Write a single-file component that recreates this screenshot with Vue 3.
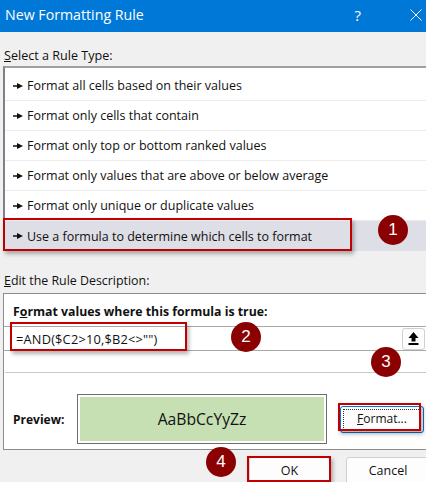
<script setup>
const rules = [
  'Format all cells based on their values',
  'Format only cells that contain',
  'Format only top or bottom ranked values',
  'Format only values that are above or below average',
  'Format only unique or duplicate values',
  'Use a formula to determine which cells to format',
]
</script>

<template>
  <div class="dialog">
    <header class="title">
      <span class="title-text">New Formatting Rule</span>
      <span class="help">?</span>
      <svg class="close" width="12" height="12" viewBox="0 0 12 12">
        <path d="M.5.5 11.5 11.5M11.5.5 .5 11.5" stroke="#fff" stroke-width="1" fill="none" />
      </svg>
    </header>

    <main class="body">
      <div class="label first"><u>S</u>elect a Rule Type:</div>
      <ul class="list">
        <li v-for="(r, i) in rules" :key="r" class="row" :class="{ sel: i === 5 }">
          <svg class="arrow" width="10" height="6" viewBox="0 0 10 6">
            <path d="M0 2.2h4V0l6 3-6 3V3.8H0z" fill="#111" />
          </svg>
          <span>{{ r }}</span>
        </li>
      </ul>

      <div class="label second"><u>E</u>dit the Rule Description:</div>
      <section class="panel">
        <div class="bold heading">F<u>o</u>rmat values where this formula is true:</div>
        <div class="formula">
          <span class="formula-text">=AND($C2&gt;10,$B2&lt;&gt;"")</span>
          <button class="upload">
            <svg width="11" height="13" viewBox="0 0 11 13">
              <path d="M5.5 0 10.5 6H7.5V9.5H3.5V6H.5zM.5 11h10v2H.5z" fill="#000" />
            </svg>
          </button>
        </div>
        <div class="sep"></div>
        <div class="preview-row">
          <span class="bold preview-label">Preview:</span>
          <div class="preview"><div class="swatch">AaBbCcYyZz</div></div>
          <button class="btn format"><span class="dots"><u>F</u>ormat...</span></button>
        </div>
      </section>

      <footer class="actions">
        <button class="btn ok">OK</button>
        <button class="btn cancel">Cancel</button>
      </footer>
    </main>

    <div class="mark m-rule"></div>
    <div class="mark m-formula"></div>
    <div class="mark m-format"></div>
    <div class="mark m-ok"></div>
    <div class="badge b1">1</div>
    <div class="badge b2">2</div>
    <div class="badge b3">3</div>
    <div class="badge b4">4</div>
  </div>
</template>

<style scoped>
.dialog {
  position: relative;
  width: 426px;
  height: 482px;
  overflow: hidden;
  background: #f0f0f0;
  font-family: "Open Sans", "Noto Sans", sans-serif;
  font-size: 12.5px;
  color: #111;
}
.title {
  height: 32px;
  box-sizing: border-box;
  padding: 0 4px 3px 5px;
  background: #0078d7;
  color: #fff;
  display: flex;
  align-items: center;
}
.title-text { font-size: 14.2px; flex: 1; }
.help { font-size: 15px; margin-right: 49px; }
.body { padding: 0 0 0 3px; }
.label { line-height: 18px; }
.first { padding: 15px 0 0 1px; height: 34px; box-sizing: border-box; font-size: 12.6px; }
.list {
  list-style: none;
  margin: 0;
  padding: 3px 0 0 0;
  height: 185px;
  box-sizing: border-box;
  background: #fff;
  border: 2px solid #808088;
  border-right: 0;
  border-bottom-width: 1px;
  border-top-color: #a0a0a0;
}
.row {
  height: 30px;
  display: flex;
  align-items: center;
  gap: 4px;
  padding-left: 8px;
  border-bottom: 1px solid #ececec;
  box-sizing: border-box;
}
.row.sel { background: #dedee6; border-bottom: 0; }
.arrow { flex: none; }
.second { padding: 21px 0 0 1px; height: 42px; box-sizing: border-box; font-size: 12.4px; }
.panel {
  height: 157px;
  box-sizing: border-box;
  border: 1px solid #8c8c8c;
  border-right: 0;
  background: #fff;
  padding-top: 9px;
}
.bold { font-weight: 700; }
.heading { padding-left: 9px; line-height: 17px; font-size: 12.3px; }
.formula {
  margin: 6px 0 0 0;
  height: 25px;
  box-sizing: border-box;
  border-top: 1px solid #a9a9a9;
  border-bottom: 1px solid #a9a9a9;
  display: flex;
  align-items: center;
  justify-content: space-between;
  padding-left: 12px;
  font-size: 12.8px;
  letter-spacing: .2px;
}
.upload {
  width: 23px;
  height: 22px;
  padding: 0;
  margin-right: 1px;
  background: #fdfdfd;
  border: 1px solid #d0d0d0;
  border-radius: 3px;
  display: flex;
  align-items: center;
  justify-content: center;
}
.sep { height: 1px; background: #c8c8c8; margin: 21px 0 0 1px; }
.preview-row {
  display: flex;
  align-items: center;
  margin-top: 21px;
  padding-left: 9px;
}
.preview-label { width: 64px; font-size: 12px; }
.preview {
  width: 250px;
  height: 50px;
  box-sizing: border-box;
  border: 1px solid #6e6e6e;
  padding: 2px;
  background: #fff;
}
.swatch {
  height: 100%;
  background: #c6dfb3;
  display: flex;
  align-items: center;
  justify-content: center;
  font-size: 15.7px;
}
.btn {
  font: inherit;
  color: #111;
  background: #fdfdfd;
  box-sizing: border-box;
  border: 1px solid #d0d0d0;
  border-radius: 3px;
  padding: 0;
  flex: none;
}
.format {
  width: 84px;
  height: 27px;
  margin-left: 13px;
  padding: 2px;
  border-color: #0078d7;
  font-size: 12px;
}
.dots {
  display: block;
  height: 100%;
  box-sizing: border-box;
  line-height: 18px;
  border: 1px dotted #333;
}
.actions {
  display: flex;
  padding: 7px 0 0 246px;
  gap: 16px;
}
.ok { width: 81px; height: 30px; padding-bottom: 4px; }
.cancel { width: 90px; height: 30px; padding: 0 6px 4px 0; }
.mark {
  position: absolute;
  border: 2px solid #c00000;
  box-shadow: 2px 3px 4px rgba(0, 0, 0, .3);
  box-sizing: border-box;
}
.m-rule { left: 3px; top: 218px; width: 349px; height: 33px; }
.m-formula { left: 10px; top: 322px; width: 177px; height: 29px; }
.m-format { left: 338px; top: 403px; width: 83px; height: 28px; }
.m-ok { left: 247px; top: 456px; width: 84px; height: 26px; }
.badge {
  position: absolute;
  width: 30px;
  height: 30px;
  border-radius: 50%;
  background: #8b0000;
  color: #fff;
  font-family: "Liberation Sans", sans-serif;
  font-size: 17px;
  display: flex;
  align-items: center;
  justify-content: center;
}
.b1 { left: 378px; top: 215px; }
.b2 { left: 231px; top: 322px; }
.b3 { left: 371px; top: 347px; }
.b4 { left: 206px; top: 447px; }
</style>

<style>
html, body { margin: 0; padding: 0; }
</style>
